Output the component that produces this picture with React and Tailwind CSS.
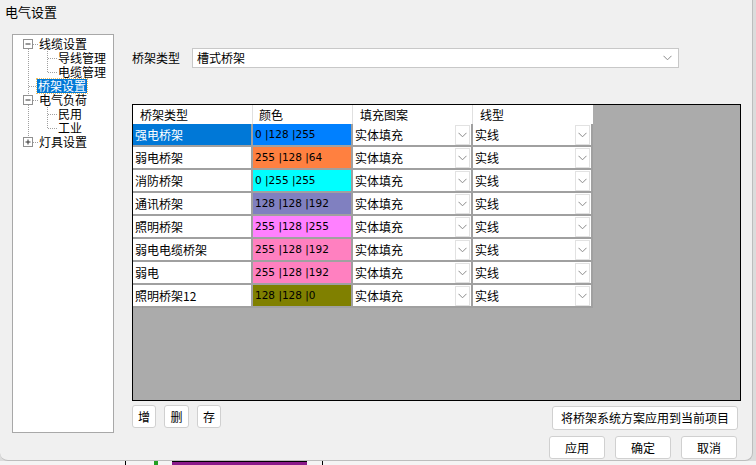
const FONT = { fontFamily: '"Noto Sans CJK SC", "Noto Sans", sans-serif' };

const rows = [
  { name: "强电桥架", rgb: "0 |128 |255", color: "bg-[#0080ff]", selected: true },
  { name: "弱电桥架", rgb: "255 |128 |64", color: "bg-[#ff8040]" },
  { name: "消防桥架", rgb: "0 |255 |255", color: "bg-[#00ffff]" },
  { name: "通讯桥架", rgb: "128 |128 |192", color: "bg-[#8080c0]" },
  { name: "照明桥架", rgb: "255 |128 |255", color: "bg-[#ff80ff]" },
  { name: "弱电电缆桥架", rgb: "255 |128 |192", color: "bg-[#ff80c0]" },
  { name: "弱电", rgb: "255 |128 |192", color: "bg-[#ff80c0]" },
  { name: "照明桥架12", rgb: "128 |128 |0", color: "bg-[#808000]" },
];

const tree = [
  { label: "线缆设置", level: 0, box: "minus" },
  { label: "导线管理", level: 1 },
  { label: "电缆管理", level: 1 },
  { label: "桥架设置", level: 0, selected: true },
  { label: "电气负荷", level: 0, box: "minus" },
  { label: "民用", level: 1 },
  { label: "工业", level: 1 },
  { label: "灯具设置", level: 0, box: "plus" },
];

function Chevron({ className = "" }) {
  return (
    <svg width="9" height="6" viewBox="0 0 9 6" className={className}>
      <path d="M0.5 0.8 L4.5 4.8 L8.5 0.8" fill="none" stroke="#8a8a8a" strokeWidth="1" />
    </svg>
  );
}

function ComboCell({ text, width }) {
  return (
    <div className={`${width} h-full bg-white border-r-2 border-[#a0a0a0] flex items-center justify-between`}>
      <span className="pl-[2px] text-[12px] text-black">{text}</span>
      <div className="w-[15px] h-[20px] mr-[1px] border border-[#e2e2e2] bg-white flex items-center justify-center">
        <Chevron />
      </div>
    </div>
  );
}

function TreeLines() {
  // dotted connectors and expand boxes, coordinates inside the tree panel
  const dot = { stroke: "#a0a0a0", strokeWidth: 1, strokeDasharray: "1 1" };
  return (
    <svg className="absolute left-0 top-0" width="100" height="120">
      <line x1="15.5" y1="14" x2="15.5" y2="103" {...dot} />
      <line x1="34.5" y1="14" x2="34.5" y2="37" {...dot} />
      <line x1="34.5" y1="70" x2="34.5" y2="93" {...dot} />
      <line x1="20" y1="9.5" x2="25" y2="9.5" {...dot} />
      <line x1="35" y1="23.5" x2="44" y2="23.5" {...dot} />
      <line x1="35" y1="37.5" x2="44" y2="37.5" {...dot} />
      <line x1="16" y1="51.5" x2="24" y2="51.5" {...dot} />
      <line x1="20" y1="65.5" x2="25" y2="65.5" {...dot} />
      <line x1="35" y1="79.5" x2="44" y2="79.5" {...dot} />
      <line x1="35" y1="93.5" x2="44" y2="93.5" {...dot} />
      <line x1="20" y1="107.5" x2="25" y2="107.5" {...dot} />
      {[5, 61, 103].map((y, i) => (
        <g key={y}>
          <rect x="10.5" y={y - 0.5} width="9" height="9" fill="#fff" stroke="#909090" />
          <line x1="12.5" y1={y + 4} x2="17.5" y2={y + 4} stroke="#303030" />
          {i === 2 && <line x1="15" y1={y + 1.5} x2="15" y2={y + 6.5} stroke="#303030" />}
        </g>
      ))}
    </svg>
  );
}

function Btn({ children, className = "" }) {
  return (
    <div className={`bg-white border border-[#d0d0d0] rounded-[3px] flex items-center justify-center text-[12px] text-black ${className}`}>
      {children}
    </div>
  );
}

export default function App() {
  return (
    <div className="w-[756px] h-[465px] bg-[#dcdcdc] overflow-hidden" style={FONT}>
      <div className="w-[753px] h-[461px] bg-[#f0f0f0] border-r border-b border-[#bdbdbd] rounded-br-[8px] rounded-bl-[8px] flex flex-col">
        <div className="h-[24px] pl-[5px] pt-[3px] text-[13px] leading-[18px] text-black">电气设置</div>
        <div className="flex">
          {/* tree */}
          <div className="ml-[12px] mt-[10px] w-[102px] h-[399px] bg-white border border-[#a8a8a8] relative">
            <TreeLines />
            <div className="relative pt-[2px]">
              {tree.map((t) => (
                <div key={t.label} className="h-[14px] flex items-center">
                  <span
                    className={`inline-block h-[14px] text-[12px] leading-[14px] ${
                      t.selected
                        ? "ml-[24px] px-[1px] bg-[#0078d7] text-white outline outline-1 outline-dotted outline-[#f0c060]"
                        : t.level === 0
                        ? "ml-[26px] text-black"
                        : "ml-[45px] text-black"
                    }`}
                  >
                    {t.label}
                  </span>
                </div>
              ))}
            </div>
          </div>

          {/* right side */}
          <div className="ml-[18px] flex flex-col">
            <div className="mt-[24px] flex items-center h-[20px]">
              <span className="text-[12px] text-black w-[60px]">桥架类型</span>
              <div className="w-[487px] h-[20px] bg-white border border-[#c8c8c8] flex items-center justify-between pl-[4px] pr-[6px]">
                <span className="text-[12px] text-black">槽式桥架</span>
                <Chevron />
              </div>
            </div>

            <div className="mt-[36px] w-[609px] h-[297px] bg-[#ababab] border border-black">
              <div className="w-[460px]">
                <div className="flex h-[19px] bg-white text-[12px] text-black">
                  <div className="w-[120px] pl-[7px] border-r border-[#e0e0e0] flex items-center">桥架类型</div>
                  <div className="w-[100px] pl-[6px] border-r border-[#e0e0e0] flex items-center">颜色</div>
                  <div className="w-[120px] pl-[7px] border-r border-[#e0e0e0] flex items-center">填充图案</div>
                  <div className="w-[120px] pl-[7px] flex items-center">线型</div>
                </div>
                {rows.map((r) => (
                  <div key={r.name} className="flex h-[23px] border-b-2 border-[#a0a0a0]">
                    <div
                      className={`w-[120px] h-full pl-[2px] flex items-center text-[12px] border-r-2 border-[#a0a0a0] ${
                        r.selected ? "bg-[#0078d7] text-white" : "bg-white text-black"
                      }`}
                    >
                      {r.name}
                    </div>
                    <div className={`w-[100px] h-full ${r.color} border-r-2 border-[#a0a0a0] pl-[2px] flex items-center text-[11px] text-black`} style={{ fontFamily: '"DejaVu Sans", "Liberation Sans", sans-serif', fontSize: "10.5px" }}>
                      {r.rgb}
                    </div>
                    <ComboCell text="实体填充" width="w-[120px]" />
                    <ComboCell text="实线" width="w-[120px]" />
                  </div>
                ))}
              </div>
            </div>

            <div className="flex mt-[4px]">
              <div className="flex gap-[8px]">
                <Btn className="w-[24px] h-[23px]">增</Btn>
                <Btn className="w-[25px] h-[23px]">删</Btn>
                <Btn className="w-[24px] h-[23px]">存</Btn>
              </div>
              <div className="ml-auto mr-[3px] flex flex-col items-end pt-[1px]">
                <Btn className="w-[186px] h-[24px] text-[12.5px]">将桥架系统方案应用到当前项目</Btn>
                <div className="flex gap-[10px] mt-[6px] mr-[1px]">
                  <Btn className="w-[56px] h-[23px]">应用</Btn>
                  <Btn className="w-[56px] h-[23px]">确定</Btn>
                  <Btn className="w-[56px] h-[23px]">取消</Btn>
                </div>
              </div>
            </div>
          </div>
        </div>
      </div>
      <div className="flex items-end h-[4px] bg-[#f4f4f4]">
        <div className="ml-[125px] w-[1px] h-[4px] bg-black" />
        <div className="ml-[28px] w-[4px] h-[4px] bg-[#22a022]" />
        <div className="ml-[14px] w-[135px] h-[4px] bg-[#8a1a8a] border-t border-black" />
        <div className="ml-[15px] w-[1px] h-[4px] bg-black" />
      </div>
    </div>
  );
}
